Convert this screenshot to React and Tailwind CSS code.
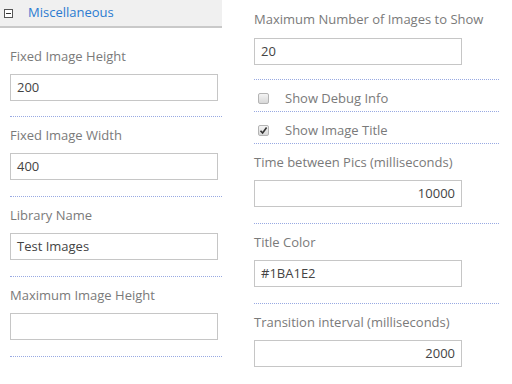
import React from "react";

const font = { fontFamily: '"Open Sans", "Noto Sans", sans-serif' };

function Field({ label, value, right, first, last }) {
  return (
    <div
      className={`${last ? "" : "border-b border-dotted border-[#98a9e2]"} ${
        first ? "pb-[15px] pt-[18px]" : "pb-[16px] pt-[8px]"
      }`}
    >
      <div className="h-5 leading-5 text-[13px] text-[#7a7a7a]">{label}</div>
      <div
        className={`mt-[8px] h-[27px] w-[208px] border border-[#c6c6c6] bg-white px-[6px] leading-[25px] text-[13px] text-[#444] ${
          right ? "text-right" : ""
        }`}
      >
        {value}
      </div>
    </div>
  );
}

function Check({ label, checked }) {
  return (
    <div className="flex h-[32px] items-center border-b border-dotted border-[#98a9e2] pl-[4px] pt-[6px]">
      <span className="relative flex h-[11px] w-[11px] items-center justify-center rounded-[2px] border border-[#b4b4b4] bg-gradient-to-b from-[#f4f4f4] to-[#d8d8d8]">
        {checked && (
          <svg width="9" height="9" viewBox="0 0 9 9" className="absolute">
            <path d="M1.5 4.8 L3.6 7 L7.6 1.6" fill="none" stroke="#333" strokeWidth="1.6" />
          </svg>
        )}
      </span>
      <span className="ml-[16px] text-[13px] text-[#7a7a7a]">{label}</span>
    </div>
  );
}

export default function App() {
  return (
    <div className="flex h-[384px] w-[512px] bg-white" style={font}>
      <div className="w-[222px]">
        <div className="flex h-[28px] items-center border-b-2 border-[#c9c9c9] bg-[#f0f0f0] pl-[4px]">
          <span className="flex h-[9px] w-[9px] items-center justify-center border border-[#555] bg-white">
            <span className="h-px w-[5px] bg-[#333]" />
          </span>
          <span className="ml-[15px] text-[13px] text-[#2b7bd0]">Miscellaneous</span>
        </div>
        <div className="pl-[10px]">
          <Field first label="Fixed Image Height" value="200" />
          <Field label="Fixed Image Width" value="400" />
          <Field label="Library Name" value="Test Images" />
          <Field label="Maximum Image Height" value="" />
        </div>
      </div>
      <div className="ml-[32px] w-[245px]">
        <div className="border-b border-dotted border-[#98a9e2] pb-[14px] pt-[9px]">
          <div className="h-5 leading-5 text-[13px] text-[#7a7a7a]">Maximum Number of Images to Show</div>
          <div className="mt-[9px] h-[27px] w-[208px] border border-[#c6c6c6] px-[6px] leading-[25px] text-[13px] text-[#444]">20</div>
        </div>
        <Check label="Show Debug Info" />
        <Check label="Show Image Title" checked />
        <Field label="Time between Pics (milliseconds)" value="10000" right />
        <Field label="Title Color" value="#1BA1E2" />
        <Field last label="Transition interval (milliseconds)" value="2000" right />
      </div>
    </div>
  );
}
